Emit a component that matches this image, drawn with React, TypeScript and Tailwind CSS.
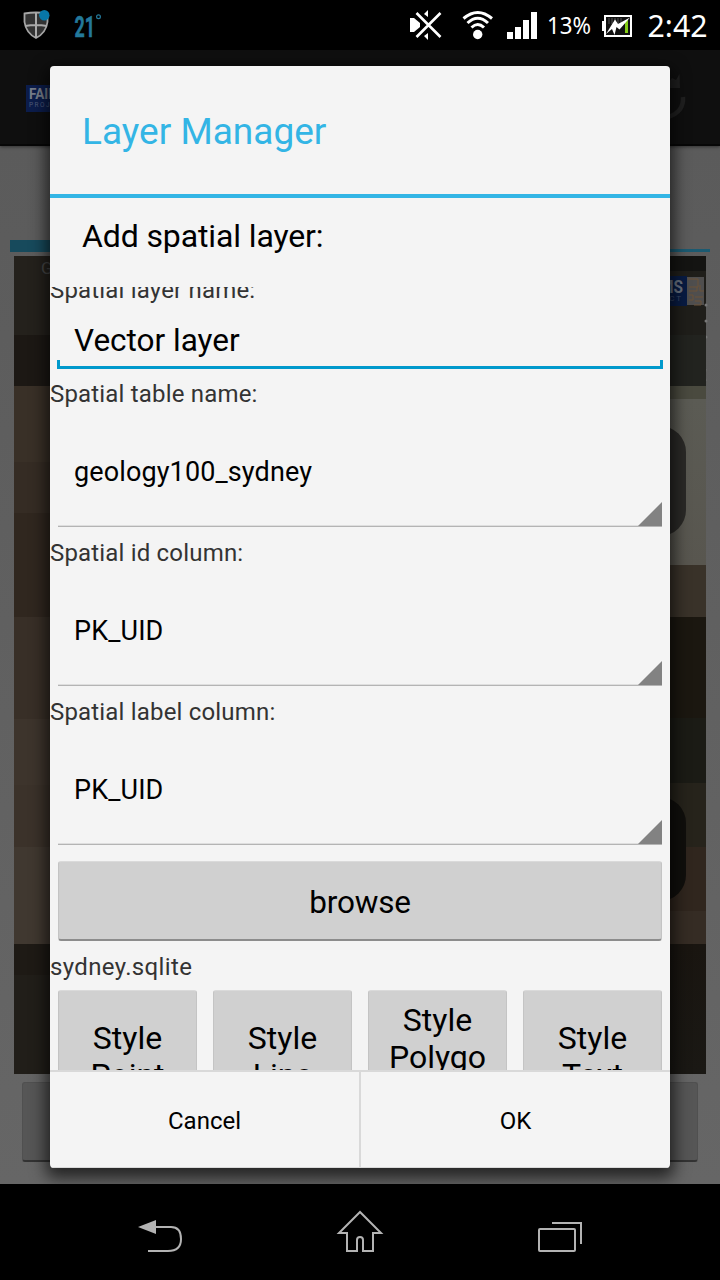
import type { ReactNode } from "react";

function StatusBar() {
  return (
    <header className="flex h-[50px] shrink-0 items-center justify-between bg-black pl-[22px] pr-[12px] text-white">
      <div className="flex items-center">
        <svg width="30" height="32" viewBox="22 9 30 32">
          <path d="M24.5 13.5Q36 11.5 47.5 13.5V22Q46 33 36 38Q26 33 24.5 22Z" fill="#333" stroke="#a5a5a5" strokeWidth="1.8" />
          <path d="M36 13V38M25 26Q36 24 47 26" stroke="#aaa" strokeWidth="2" fill="none" />
          <circle cx="44.3" cy="15.3" r="5.2" fill="#0877a8" />
        </svg>
        <svg className="ml-[22px]" width="30" height="32" viewBox="74 9 30 32">
          <text x="74.500" y="37" fill="#23799b" stroke="#23799b" strokeWidth="0.600" fontFamily="Roboto" fontWeight="bold" fontSize="30" textLength="20.500" lengthAdjust="spacingAndGlyphs">21</text>
          <circle cx="98.500" cy="16.700" r="1.900" fill="none" stroke="#23799b" strokeWidth="1.200" />
        </svg>
      </div>
      <svg className="ml-auto" width="230" height="50" viewBox="406 0 230 50">
        <path d="M410 18H414L420 23V27L414 32H410Z" fill="#fff" />
        <path d="M424 14L428 10V17ZM424 36L428 40V33Z" fill="#fff" />
        <path d="M416.500 13L440.500 37M440.500 13L416.500 37" stroke="#fff" strokeWidth="2.6" />
        <circle cx="477.700" cy="34.500" r="4.700" fill="#fff" />
        <path d="M463.500 18.500Q477.700 6.500 492 18.500M467.500 23Q477.700 13.500 488 23M471.500 27.500Q477.700 21.500 484 27.500" fill="none" stroke="#fff" strokeWidth="3" />
        <path d="M507 32h6v7h-6zM515 27h6v12h-6zM523 20h6v19h-6zM531 12h6v27h-6z" fill="#fff" />
        <text x="547" y="33.800" fill="#fff" fontFamily="Noto Sans" fontSize="23" textLength="44" lengthAdjust="spacingAndGlyphs">13%</text>
        <path d="M602 21h3v10h-3z" fill="#fff" />
        <path d="M605 16H631V36H605Z" fill="#111" stroke="#fff" strokeWidth="2" />
        <path d="M609 18V24M612 18V24M615 18V24M618 18V24M621 18V24" stroke="#555" />
        <path d="M625 20h3v13h-3z" fill="#84cc16" />
        <path d="M606 34L615 19.500L618 24L630 17.500L619.500 29.500L616.500 27L614.500 35L612 29Z" fill="#fff" />
      </svg>
      <svg width="60" height="50" viewBox="648 0 60 50" className="ml-[12px] shrink-0 overflow-visible">
        <text x="647.500" y="36.500" fill="#fff" fontFamily="Noto Sans" fontSize="31" textLength="60" lengthAdjust="spacingAndGlyphs">2:42</text>
      </svg>
    </header>
  );
}

function MapBackdrop() {
  return (
    <div className="mx-[14px] mt-[4px] flex h-[818px] bg-[#211e1a]">
      <div className="flex w-[346px] flex-col">
        <div className="h-[79px] bg-[#24211c] pl-[27px] font-['Roboto',sans-serif] text-[17px] text-[#454545]">G</div>
        <div className="h-[51px] bg-[#1c1814]" />
        <div className="h-[76px] bg-[#393027]" />
        <div className="h-[51px] bg-[#352c24]" />
        <div className="h-[104px] bg-[#30271f]" />
        <div className="h-[102px] bg-[#382f27]" />
        <div className="h-[66px] bg-[#3d342c]" />
        <div className="h-[62px] bg-[#3b322a]" />
        <div className="h-[97px] bg-[#403830]" />
        <div className="h-[31px] bg-[#1e1a15]" />
        <div className="h-[99px] bg-[#211e19]" />
      </div>
      <div className="flex w-[346px] flex-col">
        <div className="h-[15px] bg-[#141412]" />
        <div className="flex h-[64px] items-start justify-end bg-[#1f1e1a] pt-[5px]">
          <svg width="50" height="120" viewBox="656 276 50 120" className="shrink-0 overflow-visible">
            <path d="M656 276h31v30h-31z" fill="#081b43" />
            <path d="M687 277h17v28h-17z" fill="#4f4e4e" />
            <text x="660" y="292.500" fill="#68717f" fontFamily="Roboto" fontWeight="bold" fontSize="18" textLength="23" lengthAdjust="spacingAndGlyphs">MS</text>
            <text x="683" y="301" textAnchor="end" fill="#3c4a66" fontFamily="Roboto" fontSize="8" letterSpacing="2">CT</text>
            <path d="M688 279h10v8h-9m0 4h8v-4m-8 8h4v5h-4m6-3h8m-8 4h6v4h-7m10-14h-4v-6" stroke="#6d5338" fill="none" />
            <circle cx="706" cy="305" r="1.500" fill="#777" />
            <circle cx="706" cy="321" r="1.500" fill="#777" />
            <circle cx="706" cy="337" r="1.500" fill="#777" />
            <path d="M706 369Q704 375 706 381" stroke="#777" fill="none" />
          </svg>
        </div>
        <div className="h-[51px] bg-[#22231f]" />
        <div className="h-[13px] bg-[#4a4a3f]" />
        <div className="flex h-[166px] items-start justify-end bg-linear-to-b from-[#5b5b54] to-[#58564f] pr-[20px] pt-[27px]">
          <div className="h-[110px] w-[60px] rounded-[26px] bg-[#2a2927]" />
        </div>
        <div className="h-[52px] bg-[#393229]" />
        <div className="h-[101px] bg-[#1b1710]" />
        <div className="h-[65px] bg-[#1b1b15]" />
        <div className="flex h-[64px] items-start justify-end bg-[#26231b] pr-[20px] pt-[14px]">
          <div className="relative h-[104px] w-[60px] shrink-0 rounded-[26px] bg-[#100f0c]" />
        </div>
        <div className="h-[64px] bg-[#30261e]" />
        <div className="h-[33px] bg-[#352c24]" />
        <div className="h-[130px] bg-linear-to-b from-[#191510] to-[#1a1814]" />
      </div>
    </div>
  );
}

function AppBackdrop() {
  return (
    <div className="flex h-full flex-col bg-linear-to-b from-[#5a5a5a] to-[#666666]">
      <div className="flex h-[96px] shrink-0 items-center justify-between border-b-2 border-[#070707] bg-[#0f0f0f] pl-[26px] pr-[32px] pt-[2px] shadow-[0_1px_3px_#333]">
        <div className="flex h-[27px] w-[90px] flex-col bg-[#0c1d4c] pl-[3px] pt-[2px] font-['Roboto',sans-serif] text-[#777d89]">
          <span className="origin-left scale-x-[0.9] text-[15px] font-bold leading-[15px]">FAIMS</span>
          <span className="text-[6.500px] leading-[6px] tracking-[1.500px] text-[#4f5c79]">PROJECT</span>
        </div>
        <svg width="40" height="50" viewBox="648 73 40 50">
          <path d="M672 78L676 80L679.500 74L680 88H664Z" fill="#202020" />
          <path d="M683 97Q684 112 668 117" fill="none" stroke="#202020" strokeWidth="4.500" />
        </svg>
      </div>
      <div className="mx-[10px] flex h-[106px] shrink-0 items-end">
        <div className="h-[12px] w-1/2 bg-[#174a5c]" />
        <div className="h-[3px] w-1/2 bg-[#1b5a71]" />
      </div>
      <MapBackdrop />
      <div className="mx-[22px] mt-[8px] h-[80px] rounded-[3px] border border-b-2 border-[#505050] border-b-[#333] bg-[#565656]" />
    </div>
  );
}

function Label({ children, className = "" }: { children: ReactNode; className?: string }) {
  return (
    <div className={`h-[32px] shrink-0 text-[24px] leading-[32px] tracking-[0.180px] text-[#333] ${className}`}>
      {children}
    </div>
  );
}

function Spinner({ value }: { value: string }) {
  return (
    <div className="h-[127px] shrink-0 px-[8px] pb-[10px]">
      <div className="flex h-[117px] items-end justify-between border-b border-[#b4b4b4] shadow-[inset_0_-1px_0_#dedede]">
        <span className="mb-[38px] pl-[16px] text-[27px] leading-[32px] tracking-[0.120px]">{value}</span>
        <svg width="24" height="24" viewBox="0 0 24 24"><path d="M24 0V24H0Z" fill="#828282" /></svg>
      </div>
    </div>
  );
}

function GreyButton({ children, className = "" }: { children: ReactNode; className?: string }) {
  return (
    <button className={`flex shrink-0 items-center justify-center rounded-[3px] border border-b-2 border-[#c4c4c4] border-t-[#dadada] border-b-[#8c8c8c] bg-[#d0d0d0] text-center leading-[37px] ${className}`}>
      {children}
    </button>
  );
}

function Dialog() {
  return (
    <section className="flex h-[1102px] w-[620px] flex-col overflow-hidden rounded-[4px] bg-[#f4f4f4] text-black shadow-[0_6px_16px_4px_rgba(0,0,0,0.65)]">
      <h1 className="h-[132px] shrink-0 border-b-4 border-[#33b5e5] pl-[32px] text-[37px] leading-[132px] text-[#33b5e5]">Layer Manager</h1>
      <p className="h-[89px] shrink-0 pl-[32px] text-[32px] leading-[77px] tracking-[-0.120px]">Add spatial layer:</p>
      <div className="flex h-[783px] shrink-0 flex-col overflow-hidden">
        <Label className="-mt-[13px]">Spatial layer name:</Label>
        <div className="flex h-[72px] shrink-0 flex-col px-[7px]">
          <div className="h-[54px] pl-[17px] text-[31.500px] leading-[70px]">Vector layer</div>
          <div className="h-[9px] border-x-3 border-b-3 border-[#0099cc]" />
        </div>
        <Label>Spatial table name:</Label>
        <Spinner value="geology100_sydney" />
        <Label>Spatial id column:</Label>
        <Spinner value="PK_UID" />
        <Label>Spatial label column:</Label>
        <Spinner value="PK_UID" />
        <GreyButton className="mx-[8px] mb-[10px] mt-[6px] h-[80px] pt-[3px] text-[31.500px] tracking-[-0.200px]">browse</GreyButton>
        <Label className="tracking-[0.350px]">sydney.sqlite</Label>
        <div className="mt-[7px] grid shrink-0 grid-cols-4 gap-[16px] px-[8px] text-[32px]">
          <GreyButton className="h-[134px] pt-px">Style<br />Point</GreyButton>
          <GreyButton className="h-[134px] pt-px">Style<br />Line</GreyButton>
          <GreyButton className="h-[134px] pt-[2px]">Style<br />Polygo<br />n</GreyButton>
          <GreyButton className="h-[134px] pt-px">Style<br />Text</GreyButton>
        </div>
      </div>
      <div className="flex h-[98px] shrink-0 border-t-2 border-[#d9d9d9] text-[24px]">
        <button className="w-[309px] border-b border-[#d9d9d9] pt-[2px]">Cancel</button>
        <button className="flex-1 border-b border-l-2 border-[#d9d9d9] pt-[2px]">OK</button>
      </div>
    </section>
  );
}

function NavigationBar() {
  return (
    <nav className="flex h-[96px] shrink-0 items-center justify-between bg-black pl-[136px] pr-[136px]">
      <svg width="48" height="48" viewBox="136 1208 48 48" fill="none" stroke="#b3b3b3" strokeWidth="2">
        <path d="M156 1227H171Q181 1227 181 1239Q181 1251 168 1251H148" />
        <path d="M138 1227L156 1220V1234Z" fill="#b3b3b3" stroke="none" />
      </svg>
      <svg width="48" height="48" viewBox="336 1208 48 48" fill="none" stroke="#b3b3b3" strokeWidth="2">
        <path d="M360 1212L339 1233H347V1251H357V1240Q357 1237 360 1237Q363 1237 363 1240V1251H373V1233H381Z" />
      </svg>
      <svg width="48" height="48" viewBox="536 1208 48 48" fill="none" stroke="#b3b3b3" strokeWidth="2">
        <rect x="539" y="1229" width="36" height="22" rx="1" />
        <path d="M552 1223H581V1244" />
      </svg>
    </nav>
  );
}

export default function App() {
  return (
    <main className="flex h-[1280px] w-[720px] flex-col overflow-hidden bg-black font-['Roboto',sans-serif]">
      <StatusBar />
      <div className="relative h-[1134px] shrink-0 overflow-hidden">
        <AppBackdrop />
        <div className="absolute inset-0 flex justify-center pt-[16px]">
          <Dialog />
        </div>
      </div>
      <NavigationBar />
    </main>
  );
}
